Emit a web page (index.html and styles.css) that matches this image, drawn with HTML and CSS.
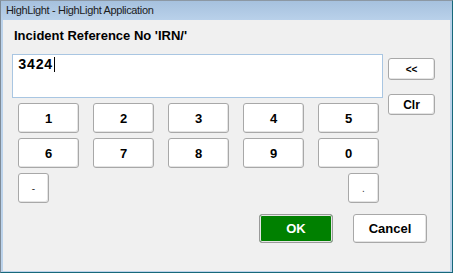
FILE: index.html
```html
<!DOCTYPE html>
<html>
<head>
  <title>HighLight - HighLight Application</title>
  <link rel="stylesheet" href="styles.css">
</head>
<body>
  <div class="window">
    <div class="title">HighLight - HighLight Application</div>
    <div class="client">
      <div class="label">Incident Reference No 'IRN/'</div>

      <div class="panel">
        <div class="main">
          <div class="entry">3424<span class="caret"></span></div>

          <div class="keypad">
            <button class="btn">1</button>
            <button class="btn">2</button>
            <button class="btn">3</button>
            <button class="btn">4</button>
            <button class="btn">5</button>
            <button class="btn">6</button>
            <button class="btn">7</button>
            <button class="btn">8</button>
            <button class="btn">9</button>
            <button class="btn">0</button>
            <button class="btn small minus">-</button>
            <button class="btn small dot">.</button>
          </div>
        </div>

        <div class="side">
          <button class="btn side-btn arrows">&lt;&lt;</button>
          <button class="btn side-btn clr">Clr</button>
        </div>
      </div>

      <div class="actions">
        <button class="btn action ok">OK</button>
        <button class="btn action">Cancel</button>
      </div>
    </div>
  </div>
</body>
</html>
```

FILE: styles.css
```css
body {
  margin: 0;
  font-family: "Liberation Sans", Arial, sans-serif;
  background: #ffffff;
}

.window {
  width: 453px;
  height: 273px;
  box-sizing: border-box;
  border: 1px solid;
  border-color: #8c98a4 #17697b #17697b #7f8b97;
  background: #bcd3eb;
  display: flex;
  flex-direction: column;
}

.title {
  height: 19px;
  line-height: 19px;
  padding-left: 5px;
  font-size: 11px;
  letter-spacing: -0.35px;
  color: #1b1b1b;
  background: linear-gradient(#a6c1de, #b9d1ea);
}

.client {
  flex: 1;
  margin: 0 2px 1px 2px;
  padding: 8px 0 0 9px;
  background: #f0f0f0;
}

.label {
  margin-left: 2px;
  font-size: 13px;
  line-height: 15px;
  font-weight: bold;
  color: #000;
}

.panel {
  margin-top: 11px;
  display: grid;
  grid-template-columns: 371px 47px;
  column-gap: 5px;
  align-items: start;
}

.entry {
  height: 44px;
  box-sizing: border-box;
  border: 1px solid #a9c6e2;
  background: #ffffff;
  padding: 2px 0 0 5px;
  font-family: "Liberation Mono", "Courier New", monospace;
  font-weight: bold;
  font-size: 14px;
  line-height: 16px;
  letter-spacing: 0.3px;
  color: #000;
}

.caret {
  display: inline-block;
  width: 0;
  height: 15px;
  margin-left: 1px;
  border-left: 1px solid #000;
  vertical-align: -3px;
}

.btn {
  display: flex;
  align-items: center;
  justify-content: center;
  box-sizing: border-box;
  padding: 0;
  border: 1px solid #a8a8a8;
  border-radius: 3px;
  background: #ffffff;
  box-shadow: inset -1px -1px 0 #e4e4e4;
  font-family: "Liberation Sans", Arial, sans-serif;
  font-weight: bold;
  font-size: 13px;
  color: #000;
}

.keypad {
  margin-top: 5px;
  padding-left: 6px;
  display: grid;
  grid-template-columns: repeat(5, 61px);
  grid-auto-rows: 30px;
  column-gap: 14px;
  row-gap: 5px;
}

.small {
  width: 31px;
  font-size: 10px;
  font-weight: normal;
  color: #333;
}

.minus {
  grid-column: 1;
}

.dot {
  grid-column: 5;
  justify-self: end;
}

.side {
  padding-top: 4px;
  display: flex;
  flex-direction: column;
  gap: 14px;
}

.side-btn {
  height: 22px;
  font-size: 12px;
}

.arrows {
  font-size: 10px;
}

.clr {
  height: 21px;
}

.actions {
  margin-top: 11px;
  padding-right: 23px;
  display: flex;
  justify-content: flex-end;
  gap: 20px;
}

.action {
  width: 74px;
  height: 29px;
}

.ok {
  background: #008000;
  color: #ffffff;
  border-color: #9a9a9a;
  box-shadow: inset 0 0 0 1px #e6e6e6;
}
```
